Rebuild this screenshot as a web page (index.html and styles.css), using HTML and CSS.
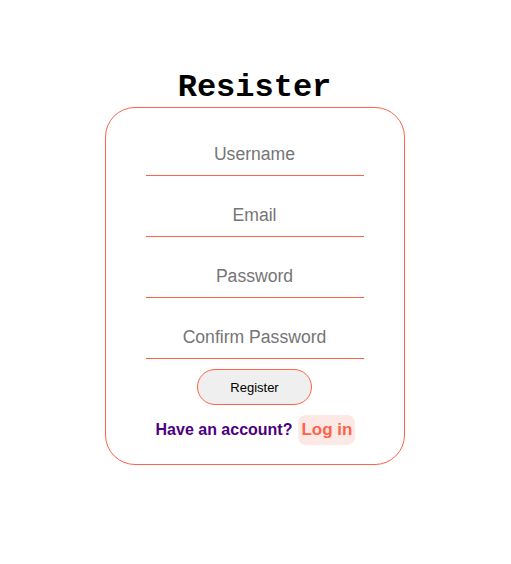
FILE: index.html
```html
<!DOCTYPE html>
<html lang="en">
<head>
<meta charset="utf-8">
<title>Resister</title>
<link rel="stylesheet" href="styles.css">
</head>
<body>
<main class="page">
  <h1 class="title">Resister</h1>
  <form class="card">
    <input class="field" type="text" placeholder="Username">
    <input class="field" type="email" placeholder="Email">
    <input class="field" type="password" placeholder="Password">
    <input class="field" type="password" placeholder="Confirm Password">
    <button class="btn" type="button">Register</button>
    <div class="account">
      <span class="account-text">Have an account?</span>
      <a class="login" href="#">Log in</a>
    </div>
  </form>
</main>
</body>
</html>
```
FILE: styles.css
```css
* { box-sizing: border-box; }
html, body { margin: 0; padding: 0; background: #fff; }
body { font-family: "Liberation Sans", Arial, sans-serif; }

.page {
  display: flex;
  flex-direction: column;
  align-items: center;
  padding-top: 70px;
  padding-right: 2px;
}

.title {
  margin: 0 0 1px;
  font-family: "Liberation Mono", "Courier New", monospace;
  font-size: 32px;
  line-height: 36px;
  font-weight: bold;
  color: #000;
}

.card {
  width: 300px;
  border: 1px solid #ff6347;
  border-radius: 30px;
  padding: 26px 0 19px;
  display: flex;
  flex-direction: column;
  align-items: center;
}

.field {
  width: 218px;
  border: none;
  border-bottom: 1px solid #ff6347;
  padding: 10px 0;
  margin: 0 0 19px;
  font-family: "Liberation Sans", Arial, sans-serif;
  font-size: 17.6px;
  line-height: 21px;
  height: 42px;
  text-align: center;
  outline: none;
  background: transparent;
}
.field:last-of-type { margin-bottom: 0; }
.field::placeholder { color: #757575; }

.btn {
  margin-top: 10px;
  width: 115px;
  height: 36px;
  border: 1px solid #ff6347;
  border-radius: 18px;
  background: #efefef;
  font-family: "Liberation Sans", Arial, sans-serif;
  font-size: 13px;
  color: #000;
}

.account {
  margin-top: 10px;
  display: flex;
  align-items: center;
  gap: 6px;
  padding-left: 2px;
}

.account-text {
  font-size: 16px;
  font-weight: bold;
  color: #4b0082;
}

.login {
  font-size: 17px;
  font-weight: bold;
  color: #ff6347;
  background: #fce9e6;
  border-radius: 8px;
  padding: 5px 3px;
  line-height: 20px;
  text-decoration: none;
}
```
